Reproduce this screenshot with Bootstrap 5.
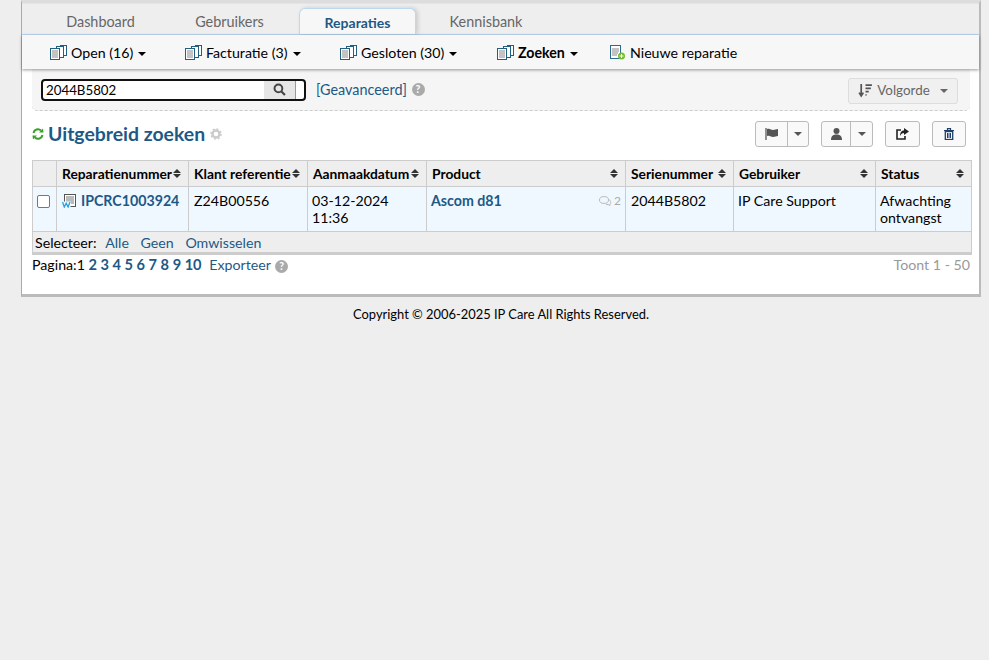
<!DOCTYPE html>
<html lang="nl">
<head>
<meta charset="utf-8">
<title>Reparaties</title>
<link href="https://cdn.jsdelivr.net/npm/bootstrap@5.3.0/dist/css/bootstrap.min.css" rel="stylesheet">
<style>
html,body{height:100%}
body{background:#eee;font-family:Lato,"Liberation Sans",sans-serif;font-size:14.2px;line-height:17px;color:#000;margin:0}
a{text-decoration:none;color:#1d5987}
.shell{margin-left:21px;width:960px;background:#fff;border-left:1px solid #aaa;border-right:2px solid #bbb;border-bottom:3px solid #bbb;border-top:3px solid #ddd;height:297px}
.tabbar{height:32px;background:#eee;border-bottom:1px solid #bcd9f2;border-top:1px solid #e4e4e4;padding-left:15px;align-items:flex-end}
.tabitem{height:26px;color:#666;font-size:14.4px;text-align:center;line-height:28px}
.tabitem.now{background:#f7f7f7;color:#1d5987;font-weight:700;border:1px solid #bcd9f2;border-bottom:0;border-radius:6px 6px 0 0;box-shadow:2px 0 4px rgba(0,0,0,.15);font-size:14px;line-height:27px}
.tab-a{width:127px}.tab-b{width:131px;margin-right:4px}.tab-c{width:117px}.tab-d{width:140px}
.subbar{height:34px;background:#f7f7f7;box-shadow:0 1px 3px rgba(0,0,0,.4);position:relative;padding-left:28px;align-items:center}
.subitem{display:flex;align-items:center;color:#000;font-size:14.2px;gap:4px}
.sub-a{width:135px}.sub-b{width:155px}.sub-c{width:157px}.sub-d{width:113px}
.caret-dn{display:inline-block;border-left:4px solid transparent;border-right:4px solid transparent;border-top:4px solid currentColor;margin-left:5px;vertical-align:middle}
.caret-flat{margin:0}
.caret-order{margin-left:6px}
.searchpanel{margin:0 10px;height:42px;background:#f5f5f5;border-bottom:1px dashed #ccc;border-radius:0 0 5px 5px;padding:0 12px 0 9px;align-items:center;width:938px}
.searchbox{width:265px;height:22px;border:2px solid #111;border-radius:4px;background:#fff;overflow:hidden;font-size:13.3px}
.searchbox span.val{flex:1;padding-left:3px;line-height:18px}
.searchbtn{width:32px;background:#e6e6e6;border-right:1px solid #999}
.searchtail{width:8px}
.advlink{margin-left:10px;font-size:14.4px}
.qmark{display:inline-block;width:13px;height:13px;border-radius:50%;background:#aaa;color:#fff;font-size:10.5px;line-height:13px;text-align:center;font-weight:700;margin-left:1px}
.orderbtn{width:110px;height:26px;margin-top:2px;border:1px solid #ddd;border-radius:3px;background:#f0f0f0;color:#666;font-size:13.4px;align-items:center;justify-content:center;gap:4px}
.headrow{margin:0 10px;width:938px;height:49px;align-items:center;padding-bottom:3px}
.pagetitle{font-size:19.4px;line-height:24px;font-weight:700;color:#1d5987;margin:0 5px 0 4px}
.toolset{gap:12px;margin-right:4px}
.toolgroup{height:26px;border:1px solid #bbb;border-radius:3px;background:#f9f9f9;align-items:center}
.toolgroup .part{height:100%;display:flex;align-items:center;justify-content:center;color:#555}
.toolgroup .part+.part{border-left:1px solid #bbb}
.tg-a{width:54px}.tg-b{width:52px}.tg-c{width:35px}.tg-d{width:34px}
.p-a1{width:31px}.p-a2{width:21px}.p-b1{width:28px}.p-b2{width:22px}
.gridwrap{margin:0 10px;width:939px}
.gridtable{table-layout:fixed;border-collapse:collapse;width:939px;font-size:14.2px;margin:0}
.c1{width:24px}.c2{width:132px}.c3{width:119px}.c4{width:119px}.c5{width:199px}.c6{width:108px}.c7{width:142px}.c8{width:96px}
.gridtable th{background:#eee;height:26px;border:1px solid #ccc;padding:0 7px 0 5px;font-weight:700;font-size:13.8px;white-space:nowrap}
.gridtable td{background:#f0f8ff;height:45px;border:1px solid #ccc;padding:5px 4px;vertical-align:top;line-height:17px}
.gridtable td.pad5{padding-left:5px}
.gridtable th>div{display:flex;justify-content:space-between;align-items:center}
.sortmark{display:inline-flex;flex-direction:column;gap:1px;flex:none}
.sortmark i{display:block;border-left:4px solid transparent;border-right:4px solid transparent}
.sortmark i:first-child{border-bottom:4px solid #333}
.sortmark i:last-child{border-top:4px solid #333}
.gridtable td.selectcell{background:#eee;height:22px;padding:0 2px;border-bottom:3px solid #ccc;vertical-align:middle}
.selectcell a{margin-left:8px}
.selectcell a:first-of-type{margin-left:5px}
.gridtable td.checkcell{padding-left:4px}
.gridtable td.idcell{padding-left:5px}
.idline{gap:5px}
.idline svg{flex:none}
.checkfake{display:block;width:13px;height:13px;border:1px solid #777;border-radius:2px;background:#fff;margin:3px 0 0 0}
.boldlink{font-weight:700;font-size:14.2px;color:#1d5987}
.countnote{color:#aaa;font-size:12px;display:flex;align-items:center;gap:2px}
.pagerrow{margin:0 10px;width:939px;justify-content:space-between;padding:1px 1px 0 0;line-height:17px}
.pagenums{font-size:14.6px;color:#1d5987}
.shown{color:#999}
.copyline{width:100%;text-align:center;font-size:12.9px;margin-top:9px;padding-left:13px}
</style>
</head>
<body>
<div class="shell">
  <div class="tabbar d-flex">
    <div class="tabitem tab-a">Dashboard</div>
    <div class="tabitem tab-b">Gebruikers</div>
    <div class="tabitem now tab-c">Reparaties</div>
    <div class="tabitem tab-d">Kennisbank</div>
  </div>
  <div class="subbar d-flex">
    <div class="subitem sub-a"><svg width="17" height="15" viewBox="0 0 17 15"><g fill="#fff" stroke="#1f5f7f"><rect x="10.5" y=".5" width="6" height="10"/><rect x="6.5" y="1.5" width="7" height="11"/><rect x=".5" y="3.5" width="9" height="11"/></g><path d="M2 6h6M2 8h6M2 10h6M2 12h6" stroke="#888"/></svg><span>Open (16)<i class="caret-dn"></i></span></div>
    <div class="subitem sub-b"><svg width="17" height="15" viewBox="0 0 17 15"><g fill="#fff" stroke="#1f5f7f"><rect x="10.5" y=".5" width="6" height="10"/><rect x="6.5" y="1.5" width="7" height="11"/><rect x=".5" y="3.5" width="9" height="11"/></g><path d="M2 6h6M2 8h6M2 10h6M2 12h6" stroke="#888"/></svg><span>Facturatie (3)<i class="caret-dn"></i></span></div>
    <div class="subitem sub-c"><svg width="17" height="15" viewBox="0 0 17 15"><g fill="#fff" stroke="#1f5f7f"><rect x="10.5" y=".5" width="6" height="10"/><rect x="6.5" y="1.5" width="7" height="11"/><rect x=".5" y="3.5" width="9" height="11"/></g><path d="M2 6h6M2 8h6M2 10h6M2 12h6" stroke="#888"/></svg><span>Gesloten (30)<i class="caret-dn"></i></span></div>
    <div class="subitem sub-d"><svg width="17" height="15" viewBox="0 0 17 15"><g fill="#fff" stroke="#1f5f7f"><rect x="10.5" y=".5" width="6" height="10"/><rect x="6.5" y="1.5" width="7" height="11"/><rect x=".5" y="3.5" width="9" height="11"/></g><path d="M2 6h6M2 8h6M2 10h6M2 12h6" stroke="#888"/></svg><span class="fw-bold">Zoeken<i class="caret-dn"></i></span></div>
    <div class="subitem"><svg width="16" height="15" viewBox="0 0 16 15"><rect x=".5" y=".5" width="10" height="13" fill="#fff" stroke="#2c6a8f"/><path d="M2 4h7M2 6h7M2 8h6M2 10h5" stroke="#888"/><circle cx="11.5" cy="11" r="3.5" fill="#6fbf2a"/><path d="M9.5 11h4M11.5 9v4" stroke="#fff"/></svg><span>Nieuwe reparatie</span></div>
  </div>
  <div class="searchpanel d-flex">
    <div class="searchbox d-flex">
      <span class="val">2044B5802</span>
      <span class="searchbtn d-flex align-items-center justify-content-center"><svg width="13" height="13" viewBox="0 0 12 12"><circle cx="5" cy="5" r="3.6" fill="none" stroke="#444" stroke-width="1.8"/><path d="M7.8 7.8 11 11" stroke="#444" stroke-width="2"/></svg></span>
      <span class="searchtail"></span>
    </div>
    <a class="advlink" href="#">[Geavanceerd]</a>&nbsp;<span class="qmark">?</span>
    <div class="orderbtn d-flex ms-auto"><svg width="15" height="15" viewBox="0 0 14 14"><path d="M3 1v10M1 9l2 3 2-3" fill="none" stroke="#555" stroke-width="1.6"/><path d="M7 2h6M7 5h5M7 8h3M7 11h1" stroke="#555" stroke-width="1.6"/></svg><span>Volgorde</span><i class="caret-dn caret-order"></i></div>
  </div>
  <div class="headrow d-flex">
    <svg width="12" height="12" viewBox="0 0 12 12"><path d="M1.5 5A4.5 4.5 0 0 1 9 2.5" fill="none" stroke="#3aa02a" stroke-width="2"/><path d="M7 4.5 11.5 4.5 11 .5z" fill="#3aa02a"/><path d="M10.5 7A4.5 4.5 0 0 1 3 9.5" fill="none" stroke="#3aa02a" stroke-width="2"/><path d="M5 7.5H.5L1 11.5z" fill="#3aa02a"/></svg>
    <span class="pagetitle">Uitgebreid zoeken</span>
    <svg width="12" height="12" viewBox="0 0 12 12"><circle cx="6" cy="6" r="3.5" fill="none" stroke="#ccc" stroke-width="2.5"/><circle cx="6" cy="6" r="5" fill="none" stroke="#ccc" stroke-width="1.6" stroke-dasharray="2 1.9"/></svg>
    <div class="d-flex ms-auto toolset">
      <div class="toolgroup d-flex tg-a"><span class="part p-a1"><svg width="14" height="12" viewBox="0 0 14 12"><path d="M1 0v12" stroke="#666" stroke-width="1.4"/><path d="M2 1c3-1 4 1 6 1s3-1 5-1v7c-2 0-3 1-5 1S5 7 2 8z" fill="#555"/></svg></span><span class="part p-a2"><i class="caret-dn caret-flat"></i></span></div>
      <div class="toolgroup d-flex tg-b"><span class="part p-b1"><svg width="11" height="12" viewBox="0 0 11 12"><circle cx="5.5" cy="3" r="3" fill="#555"/><path d="M0 12c0-4 2-5.500 5.500-5.500S11 8 11 12z" fill="#555"/></svg></span><span class="part p-b2"><i class="caret-dn caret-flat"></i></span></div>
      <div class="toolgroup d-flex tg-c"><span class="part w-100"><svg width="13" height="12" viewBox="0 0 13 12"><path d="M5 2H1v9h8V8" fill="none" stroke="#222" stroke-width="1.6"/><path d="M8 0l5 3.500L8 7V5C6 5 5 6 4 8c0-3 1-5.500 4-5.500z" fill="#222"/></svg></span></div>
      <div class="toolgroup d-flex tg-d"><span class="part w-100"><svg width="10" height="12" viewBox="0 0 10 12"><path d="M0 2.500h10M3.500 2V.7h3V2" fill="none" stroke="#1d3f6a" stroke-width="1.2"/><rect x="1.300" y="3.500" width="7.400" height="8" fill="none" stroke="#1d3f6a" stroke-width="1.300"/><path d="M3.500 5v5M5 5v5M6.500 5v5" stroke="#1d3f6a"/></svg></span></div>
    </div>
  </div>
  <div class="gridwrap">
    <table class="gridtable">
      <colgroup><col class="c1"><col class="c2"><col class="c3"><col class="c4"><col class="c5"><col class="c6"><col class="c7"><col class="c8"></colgroup>
      <thead><tr>
        <th></th>
        <th><div>Reparatienummer<span class="sortmark"><i></i><i></i></span></div></th>
        <th><div>Klant referentie<span class="sortmark"><i></i><i></i></span></div></th>
        <th><div>Aanmaakdatum<span class="sortmark"><i></i><i></i></span></div></th>
        <th><div>Product<span class="sortmark"><i></i><i></i></span></div></th>
        <th><div>Serienummer<span class="sortmark"><i></i><i></i></span></div></th>
        <th><div>Gebruiker<span class="sortmark"><i></i><i></i></span></div></th>
        <th><div>Status<span class="sortmark"><i></i><i></i></span></div></th>
      </tr></thead>
      <tbody>
        <tr>
          <td class="checkcell"><span class="checkfake"></span></td>
          <td class="idcell"><div class="d-flex align-items-center idline"><svg width="14" height="14" viewBox="0 0 14 14"><rect x="2.500" y=".5" width="11" height="12" fill="#fff" stroke="#555"/><path d="M4 3h8M4 5h8M4 7h8M9 9h3" stroke="#777"/><path d="M0 7.500h8.500v6.500H0z" fill="#f0f8ff"/><path d="M.5 8l1.800 5 1.900-3.800 1.900 3.800L8 8" fill="none" stroke="#2a9fe0" stroke-width="1.300"/></svg><a class="boldlink" href="#">IPCRC1003924</a></div></td>
          <td class="pad5">Z24B00556</td>
          <td>03-12-2024<br>11:36</td>
          <td><div class="d-flex justify-content-between"><a class="boldlink" href="#">Ascom d81</a><span class="countnote"><svg width="13" height="10" viewBox="0 0 13 10"><ellipse cx="5" cy="4" rx="4.500" ry="3.400" fill="#f0f8ff" stroke="#bbb"/><path d="M9.500 3.500c2 .5 3 3 1.500 4.500v1.500L9 8.500H7" fill="none" stroke="#bbb"/></svg>2</span></div></td>
          <td class="pad5">2044B5802</td>
          <td>IP Care Support</td>
          <td>Afwachting ontvangst</td>
        </tr>
        <tr><td class="selectcell" colspan="8">Selecteer: <a href="#">Alle</a> <a href="#">Geen</a> <a href="#">Omwisselen</a></td></tr>
      </tbody>
    </table>
  </div>
  <div class="pagerrow d-flex">
    <div>Pagina:<span>1</span> <b class="pagenums"><a href="#">2</a> <a href="#">3</a> <a href="#">4</a> <a href="#">5</a> <a href="#">6</a> <a href="#">7</a> <a href="#">8</a> <a href="#">9</a> <a href="#">10</a></b> <a href="#" class="ms-1">Exporteer</a> <span class="qmark">?</span></div>
    <div class="shown">Toont 1 - 50</div>
  </div>
</div>
<div class="copyline">Copyright © 2006-2025 IP Care All Rights Reserved.</div>
</body>
</html>
